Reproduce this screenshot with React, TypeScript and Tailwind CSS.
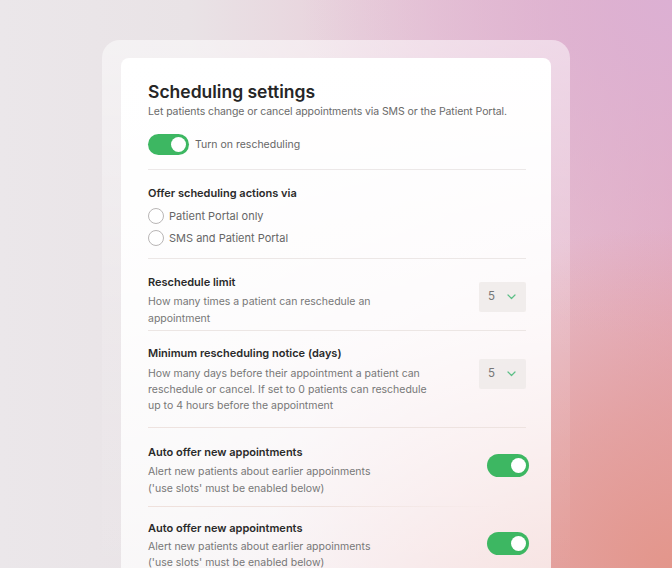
import React from "react";

function Toggle({ className = "" }: { className?: string }) {
  return (
    <div
      className={
        "flex items-center justify-end rounded-full bg-[#3db762] px-[3px] " +
        className
      }
    >
      <div className="h-[15px] w-[15px] rounded-full bg-white" />
    </div>
  );
}

function Radio({ label }: { label: string }) {
  return (
    <div className="flex items-center gap-[5px]">
      <div className="h-[16px] w-[16px] rounded-full border border-[#b9b6b6] bg-white/80" />
      <span className="text-[11px] leading-[16px] text-[#666]">{label}</span>
    </div>
  );
}

function Select() {
  return (
    <div className="flex h-[30px] w-[47px] items-center justify-between rounded-[2px] bg-[#efebea]/90 pl-[9px] pr-[10px]">
      <span className="text-[11.5px] text-[#777]">5</span>
      <svg width="9" height="6" viewBox="0 0 9 6" fill="none">
        <path
          d="M1 1l3.5 3.5L8 1"
          stroke="#5cbf86"
          strokeWidth="1.2"
          strokeLinecap="round"
          strokeLinejoin="round"
        />
      </svg>
    </div>
  );
}

export default function App() {
  return (
    <div
      className="h-[568px] w-[672px] overflow-hidden bg-[radial-gradient(ellipse_60%_60%_at_100%_100%,#e3968b_0%,rgba(227,150,139,0.6)_45%,transparent_100%),radial-gradient(ellipse_55%_60%_at_100%_0%,#dcb0d3_0%,rgba(220,176,211,0)_100%),linear-gradient(90deg,#ebe7ea_0%,#e9e3e6_28%,#e8c8d6_65%,#e4afc3_100%)] pt-[40px]"
      style={{ fontFamily: "Inter, 'Liberation Sans', sans-serif" }}
    >
      <div className="ml-[102px] w-[468px] rounded-t-[18px] bg-gradient-to-b from-white/50 via-white/15 to-white/0 px-[19px] pt-[18px]">
        <div className="rounded-t-[8px] bg-gradient-to-b from-white via-white/90 to-white/70 pl-[27px] pr-[25px] pt-[23px]">
          <h1 className="text-[17.5px] font-semibold leading-[22px] text-[#262626]">
            Scheduling settings
          </h1>
          <p className="mt-[2px] text-[10.5px] leading-[14px] tracking-[-0.08px] text-[#6a6a6a]">
            Let patients change or cancel appointments via SMS or the Patient Portal.
          </p>
          <div className="mt-[15px] flex items-center gap-[6px]">
            <Toggle className="h-[21px] w-[41px]" />
            <span className="text-[10.5px] text-[#666]">Turn on rescheduling</span>
          </div>

          <div className="mt-[14px] h-px bg-[#ece8e8]" />

          <div className="pb-[12px] pt-[15px]">
            <div className="text-[11px] font-semibold leading-[16px] text-[#2a2a2a]">
              Offer scheduling actions via
            </div>
            <div className="mt-[7px] flex flex-col gap-[6px]">
              <Radio label="Patient Portal only" />
              <Radio label="SMS and Patient Portal" />
            </div>
          </div>

          <div className="h-px bg-[#ece7e6]" />

          <div className="flex justify-between pb-[3px] pt-[15px]">
            <div>
              <div className="text-[11px] font-semibold leading-[16px] text-[#2a2a2a]">
                Reschedule limit
              </div>
              <p className="mt-[3px] text-[10.5px] leading-[17px] text-[#777]">
                How many times a patient can reschedule an
                <br />
                appointment
              </p>
            </div>
            <div className="pt-[8px]">
              <Select />
            </div>
          </div>

          <div className="h-px bg-[#ece6e4]" />

          <div className="flex justify-between pb-[13px] pt-[14px]">
            <div>
              <div className="text-[11px] font-semibold leading-[16px] text-[#2a2a2a]">
                Minimum rescheduling notice (days)
              </div>
              <p className="mt-[5px] text-[10.5px] leading-[16px] text-[#777]">
                How many days before their appointment a patient can
                <br />
                reschedule or cancel. If set to 0 patients can reschedule
                <br />
                up to 4 hours before the appointment
              </p>
            </div>
            <div className="pt-[14px]">
              <Select />
            </div>
          </div>

          <div className="h-px bg-[#eee3e0]" />

          <div className="flex justify-between pb-[9px] pt-[16px]">
            <div>
              <div className="text-[11px] font-semibold leading-[16px] text-[#2a2a2a]">
                Auto offer new appointments
              </div>
              <p className="mt-[3px] text-[10.5px] leading-[17px] text-[#777]">
                Alert new patients about earlier appoinments
                <br />
                ('use slots' must be enabled below)
              </p>
            </div>
            <div className="pt-[10px]">
              <Toggle className="mr-[-3px] h-[23px] w-[42px]" />
            </div>
          </div>

          <div className="mr-[25px] h-px bg-gradient-to-r from-[#efe1dd] via-[#efe1dd] to-transparent" />

          <div className="flex justify-between pb-[20px] pt-[13px]">
            <div>
              <div className="text-[11px] font-semibold leading-[16px] text-[#2a2a2a]">
                Auto offer new appointments
              </div>
              <p className="mt-[3px] text-[10.5px] leading-[16px] text-[#777]">
                Alert new patients about earlier appoinments
                <br />
                ('use slots' must be enabled below)
              </p>
            </div>
            <div className="pt-[12px]">
              <Toggle className="mr-[-3px] h-[23px] w-[42px]" />
            </div>
          </div>
        </div>
      </div>
    </div>
  );
}
